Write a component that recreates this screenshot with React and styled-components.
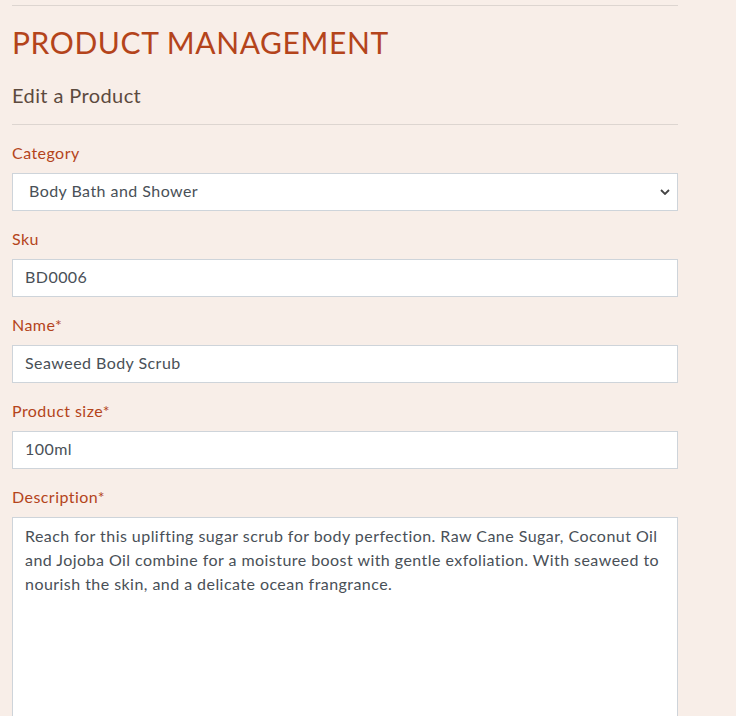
import React from "react";
import styled, { createGlobalStyle } from "styled-components";

const Global = createGlobalStyle`
  html, body { margin: 0; padding: 0; background: #f8eee8; }
  body { font-family: "Lato", "Noto Sans", sans-serif; letter-spacing: 0.45px; }
  * { box-sizing: border-box; }
`;

const Page = styled.div`
  width: 666px;
  margin-left: 12px;
  padding-top: 5px;
`;

const Rule = styled.hr`
  border: 0;
  border-top: 1px solid #ddd5d0;
  margin: 0;
`;

const Title = styled.h1`
  margin: 16px 0 0;
  font-size: 30px;
  font-weight: 400;
  line-height: 40px;
  color: #b4441b;
  letter-spacing: 0.6px;
`;

const Subtitle = styled.h2`
  margin: 19px 0 15px;
  font-size: 20px;
  font-weight: 400;
  line-height: 28px;
  color: #5c4a3e;
  letter-spacing: 0.4px;
`;

const Form = styled.form`
  padding-top: 16px;
`;

const Group = styled.div`
  margin-bottom: 16px;
`;

const Label = styled.label`
  display: block;
  font-size: 16px;
  line-height: 24px;
  color: #b4441b;
  margin-bottom: 8px;
`;

const fieldCss = `
  display: block;
  width: 100%;
  border: 1px solid #ced4da;
  background: #fff;
  font-family: "Lato", "Noto Sans", sans-serif;
  font-size: 16px;
  letter-spacing: 0.45px;
  color: #495057;
  outline: none;
`;

const Input = styled.input`
  ${fieldCss}
  height: 38px;
  padding: 4px 12px 8px;
`;

const Select = styled.select`
  ${fieldCss}
  height: 38px;
  padding: 4px 8px 8px 16px;
  border-radius: 0;
  appearance: none;
  background: #fff url("data:image/svg+xml,%3Csvg xmlns='http://www.w3.org/2000/svg' width='10' height='6' viewBox='0 0 10 6'%3E%3Cpath d='M1 1l4 4 4-4' fill='none' stroke='%23444' stroke-width='1.8'/%3E%3C/svg%3E") no-repeat right 7px center;
`;

const TextArea = styled.textarea`
  ${fieldCss}
  height: 240px;
  padding: 6px 12px;
  line-height: 24px;
  resize: none;
`;

export default function App() {
  return (
    <>
      <Global />
      <Page>
        <Rule />
        <Title>PRODUCT MANAGEMENT</Title>
        <Subtitle>Edit a Product</Subtitle>
        <Rule />
        <Form>
          <Group>
            <Label>Category</Label>
            <Select defaultValue="body">
              <option value="body">Body Bath and Shower</option>
            </Select>
          </Group>
          <Group>
            <Label>Sku</Label>
            <Input defaultValue="BD0006" />
          </Group>
          <Group>
            <Label>Name*</Label>
            <Input defaultValue="Seaweed Body Scrub" />
          </Group>
          <Group>
            <Label>Product size*</Label>
            <Input defaultValue="100ml" />
          </Group>
          <Group>
            <Label>Description*</Label>
            <TextArea defaultValue="Reach for this uplifting sugar scrub for body perfection. Raw Cane Sugar, Coconut Oil and Jojoba Oil combine for a moisture boost with gentle exfoliation. With seaweed to nourish the skin, and a delicate ocean frangrance." />
          </Group>
        </Form>
      </Page>
    </>
  );
}
